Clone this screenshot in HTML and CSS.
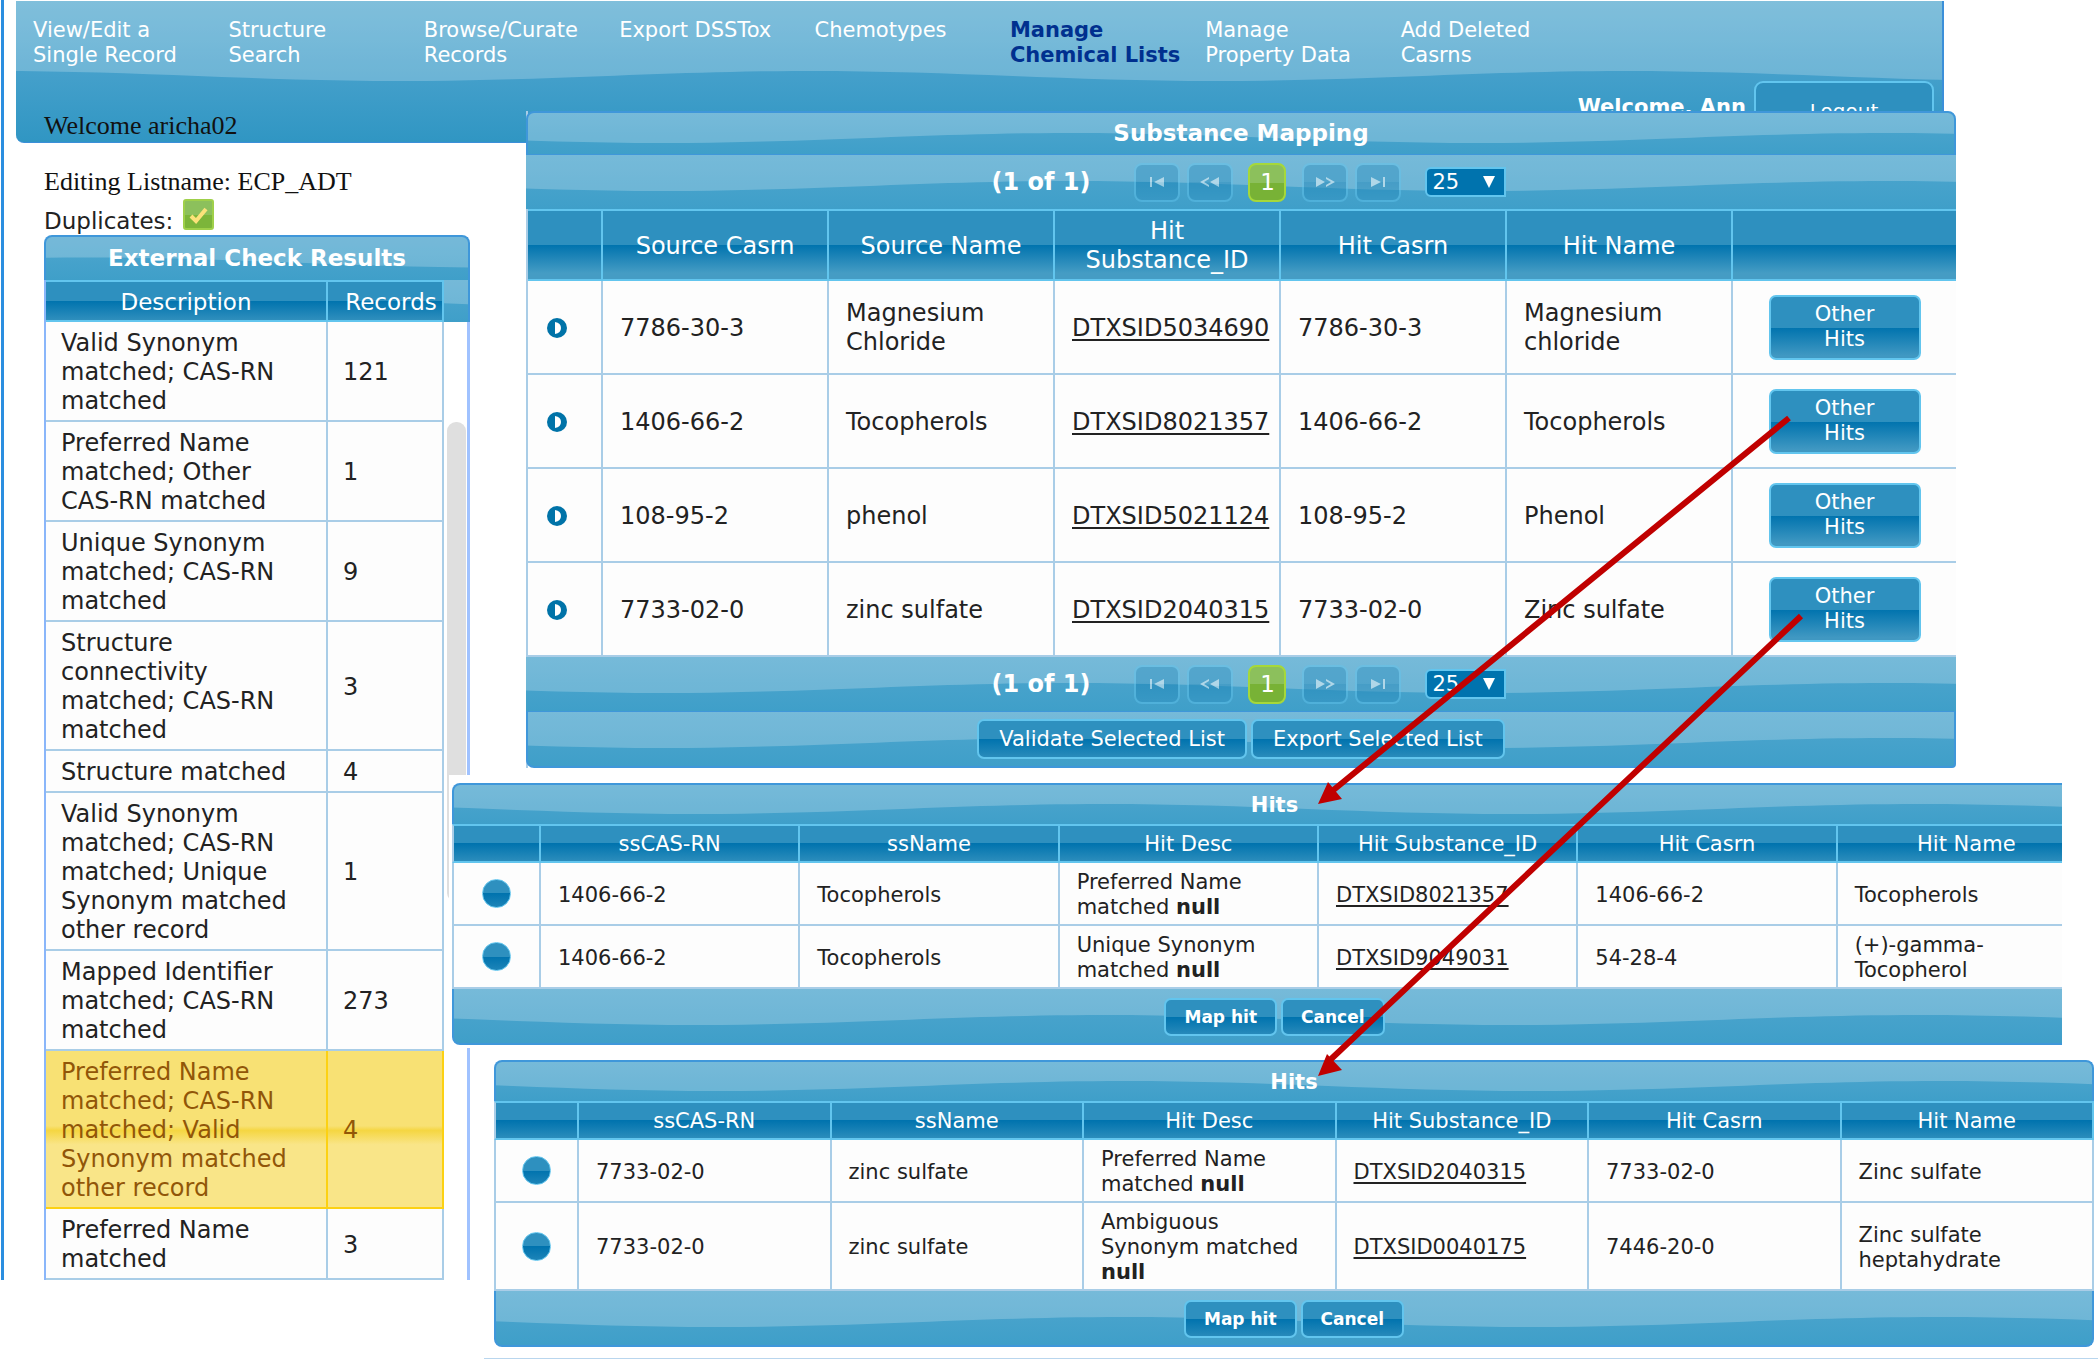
FILE: index.html
```html
<!DOCTYPE html>
<html lang="en">
<head>
<meta charset="utf-8">
<title>Manage Chemical Lists</title>
<link rel="stylesheet" href="styles.css">
</head>
<body>
<div class="app">
  <header class="header wave">
    <nav class="nav">
      <a href="#">View/Edit a<br>Single Record</a>
      <a href="#">Structure<br>Search</a>
      <a href="#">Browse/Curate<br>Records</a>
      <a href="#">Export DSSTox</a>
      <a href="#">Chemotypes</a>
      <a href="#" class="current">Manage<br>Chemical Lists</a>
      <a href="#">Manage<br>Property Data</a>
      <a href="#">Add Deleted<br>Casrns</a>
    </nav>
    <div class="account">
      <span class="user">Welcome aricha02</span>
      <strong class="greeting">Welcome, Ann</strong>
      <button class="btn logout">Logout</button>
    </div>
  </header>
  <main class="list-info">
    <p class="listname">Editing Listname: ECP_ADT</p>
    <div class="dup"><label for="dup">Duplicates:</label><input type="checkbox" id="dup" checked></div>
    <section class="check">
      <h2 class="bar wave check-title" id="check-title">External Check Results</h2>
      <div class="check-body">
        <table class="grid check-table" aria-labelledby="check-title">
          <colgroup><col><col class="col-records"></colgroup>
          <thead><tr><th>Description</th><th>Records</th></tr></thead>
          <tbody>
            <tr><td>Valid Synonym matched; CAS-RN matched</td><td>121</td></tr>
            <tr><td>Preferred Name matched; Other CAS-RN matched</td><td>1</td></tr>
            <tr><td>Unique Synonym matched; CAS-RN matched</td><td>9</td></tr>
            <tr><td>Structure connectivity matched; CAS-RN matched</td><td>3</td></tr>
            <tr><td>Structure matched</td><td>4</td></tr>
            <tr><td>Valid Synonym matched; CAS-RN matched; Unique Synonym matched other record</td><td>1</td></tr>
            <tr><td>Mapped Identifier matched; CAS-RN matched</td><td>273</td></tr>
            <tr class="selected"><td>Preferred Name matched; CAS-RN matched; Valid Synonym matched other record</td><td>4</td></tr>
            <tr><td>Preferred Name matched</td><td>3</td></tr>
          </tbody>
        </table>
        <div class="scroll"><div class="scroll-head wave"></div><div class="track"><div class="thumb"></div></div></div>
      </div>
    </section>
  </main>
</div>

<div class="windows">
  <section class="mapping">
    <h2 class="bar wave" id="map-title">Substance Mapping</h2>
    <div class="pager wave">
      <strong>(1 of 1)</strong>
      <button class="page" disabled aria-label="First page"><svg width="18" height="12" viewBox="0 0 18 12"><path d="M2 1h2v10H2zM16 1v10L6 6z"/></svg></button>
      <button class="page" disabled aria-label="Previous page"><svg width="20" height="12" viewBox="0 0 20 12"><path d="M19 1v10L10 6zM9 1v2L4 6l5 3v2L0 6z"/></svg></button>
      <button class="page active">1</button>
      <button class="page" disabled aria-label="Next page"><svg width="20" height="12" viewBox="0 0 20 12"><path d="M1 1v10l9-5zM11 1v2l5 3-5 3v2l9-5z"/></svg></button>
      <button class="page" disabled aria-label="Last page"><svg width="18" height="12" viewBox="0 0 18 12"><path d="M14 1h2v10h-2zM2 1v10l10-5z"/></svg></button>
      <select aria-label="Rows per page"><option>25</option></select>
    </div>
    <table class="grid" aria-labelledby="map-title">
      <colgroup><col class="col-toggle"><col><col><col><col><col><col class="col-act"></colgroup>
      <thead><tr><th></th><th>Source Casrn</th><th>Source Name</th><th>Hit Substance_ID</th><th>Hit Casrn</th><th>Hit Name</th><th></th></tr></thead>
      <tbody>
        <tr><td><button class="toggle" aria-label="Expand"><svg width="20" height="20" viewBox="0 0 20 20"><circle cx="10" cy="10" r="10"/><path d="M8 4q6 1 6 6t-6 6z"/></svg></button></td><td>7786-30-3</td><td>Magnesium Chloride</td><td><a href="#">DTXSID5034690</a></td><td>7786-30-3</td><td>Magnesium chloride</td><td class="act"><button class="btn other">Other<br>Hits</button></td></tr>
        <tr><td><button class="toggle" aria-label="Expand"><svg width="20" height="20" viewBox="0 0 20 20"><circle cx="10" cy="10" r="10"/><path d="M8 4q6 1 6 6t-6 6z"/></svg></button></td><td>1406-66-2</td><td>Tocopherols</td><td><a href="#">DTXSID8021357</a></td><td>1406-66-2</td><td>Tocopherols</td><td class="act"><button class="btn other">Other<br>Hits</button></td></tr>
        <tr><td><button class="toggle" aria-label="Expand"><svg width="20" height="20" viewBox="0 0 20 20"><circle cx="10" cy="10" r="10"/><path d="M8 4q6 1 6 6t-6 6z"/></svg></button></td><td>108-95-2</td><td>phenol</td><td><a href="#">DTXSID5021124</a></td><td>108-95-2</td><td>Phenol</td><td class="act"><button class="btn other">Other<br>Hits</button></td></tr>
        <tr><td><button class="toggle" aria-label="Expand"><svg width="20" height="20" viewBox="0 0 20 20"><circle cx="10" cy="10" r="10"/><path d="M8 4q6 1 6 6t-6 6z"/></svg></button></td><td>7733-02-0</td><td>zinc sulfate</td><td><a href="#">DTXSID2040315</a></td><td>7733-02-0</td><td>Zinc sulfate</td><td class="act"><button class="btn other">Other<br>Hits</button></td></tr>
      </tbody>
    </table>
    <div class="pager wave">
      <strong>(1 of 1)</strong>
      <button class="page" disabled aria-label="First page"><svg width="18" height="12" viewBox="0 0 18 12"><path d="M2 1h2v10H2zM16 1v10L6 6z"/></svg></button>
      <button class="page" disabled aria-label="Previous page"><svg width="20" height="12" viewBox="0 0 20 12"><path d="M19 1v10L10 6zM9 1v2L4 6l5 3v2L0 6z"/></svg></button>
      <button class="page active">1</button>
      <button class="page" disabled aria-label="Next page"><svg width="20" height="12" viewBox="0 0 20 12"><path d="M1 1v10l9-5zM11 1v2l5 3-5 3v2l9-5z"/></svg></button>
      <button class="page" disabled aria-label="Last page"><svg width="18" height="12" viewBox="0 0 18 12"><path d="M14 1h2v10h-2zM2 1v10l10-5z"/></svg></button>
      <select aria-label="Rows per page"><option>25</option></select>
    </div>
    <div class="foot wave map-foot">
      <button class="btn wide">Validate Selected List</button>
      <button class="btn wide">Export Selected List</button>
    </div>
  </section>

  <div class="hits-clip">
    <section class="hits">
      <h2 class="bar wave" id="hits-a">Hits</h2>
      <table class="grid" aria-labelledby="hits-a">
        <colgroup><col class="col-pick"><col><col><col><col><col><col></colgroup>
        <thead><tr><th></th><th>ssCAS-RN</th><th>ssName</th><th>Hit Desc</th><th>Hit Substance_ID</th><th>Hit Casrn</th><th>Hit Name</th></tr></thead>
        <tbody>
          <tr><td><input type="radio" name="a" aria-label="DTXSID8021357"></td><td>1406-66-2</td><td>Tocopherols</td><td>Preferred Name matched <b>null</b></td><td><a href="#">DTXSID8021357</a></td><td>1406-66-2</td><td>Tocopherols</td></tr>
          <tr><td><input type="radio" name="a" aria-label="DTXSID9049031"></td><td>1406-66-2</td><td>Tocopherols</td><td>Unique Synonym matched <b>null</b></td><td><a href="#">DTXSID9049031</a></td><td>54-28-4</td><td>(+)-gamma-<wbr>Tocopherol</td></tr>
        </tbody>
      </table>
      <div class="foot wave"><button class="btn small">Map hit</button><button class="btn small">Cancel</button></div>
    </section>
  </div>

  <section class="hits second">
    <h2 class="bar wave" id="hits-b">Hits</h2>
    <table class="grid" aria-labelledby="hits-b">
      <colgroup><col class="col-pick"><col><col><col><col><col><col></colgroup>
      <thead><tr><th></th><th>ssCAS-RN</th><th>ssName</th><th>Hit Desc</th><th>Hit Substance_ID</th><th>Hit Casrn</th><th>Hit Name</th></tr></thead>
      <tbody>
        <tr><td><input type="radio" name="b" aria-label="DTXSID2040315"></td><td>7733-02-0</td><td>zinc sulfate</td><td>Preferred Name matched <b>null</b></td><td><a href="#">DTXSID2040315</a></td><td>7733-02-0</td><td>Zinc sulfate</td></tr>
        <tr><td><input type="radio" name="b" aria-label="DTXSID0040175"></td><td>7733-02-0</td><td>zinc sulfate</td><td>Ambiguous Synonym matched <b>null</b></td><td><a href="#">DTXSID0040175</a></td><td>7446-20-0</td><td>Zinc sulfate heptahydrate</td></tr>
      </tbody>
    </table>
    <div class="foot wave"><button class="btn small">Map hit</button><button class="btn small">Cancel</button></div>
  </section>
  <div class="rule"></div>

  <svg class="arrows" aria-hidden="true">
    <path class="shaft" d="M1340 307L882 681M1352 505L880 950"/>
    <path class="head" d="M869 693L879 671L893 688ZM869 965L878 943L893 959Z"/>
  </svg>
</div>
</body>
</html>
```
FILE: styles.css
```css
* { box-sizing: border-box; }
body {
  display: grid;
  margin: 0;
  background: #fff;
  color: #222;
  font: 23px/29px "DejaVu Sans", Verdana, sans-serif;
}
h2, p { margin: 0; }
button, select, input { font: inherit; margin: 0; }
button { cursor: pointer; }

/* glossy wave surface shared by every bar */
.wave {
  background:
    url("data:image/svg+xml,%3Csvg xmlns='http://www.w3.org/2000/svg' width='815' height='200'%3E%3Cpath d='M-170 109C-20 109 87 99 237 99C387 99 495 109 645 109C795 109 902 99 1052 99V0H-170Z' fill='%23fff' fill-opacity='.22'/%3E%3C/svg%3E") 50% 50% repeat-x,
    linear-gradient(#4fa6ce, #3f9fc9);
}

/* the page and its floating windows share one grid cell */
.app {
  grid-area: 1 / 1;
  align-self: start;
  min-width: 0;
  margin: 0 156px 0 1px;
  padding-top: 1px;
  border-left: 3px solid #2a8ee0;
}
.header {
  margin-left: 12px;
  padding: 17px 8px 0 17px;
  border: solid #3b8fd9;
  border-width: 0 2px 1px 0;
  border-radius: 0 0 8px 8px;
  background-image:
    url("data:image/svg+xml,%3Csvg xmlns='http://www.w3.org/2000/svg' width='815' height='200'%3E%3Cpath d='M-170 109C-20 109 87 99 237 99C387 99 495 109 645 109C795 109 902 99 1052 99V0H-170Z' fill='%23fff' fill-opacity='.22'/%3E%3C/svg%3E"),
    linear-gradient(#5cadd1, #45a0cb 50%, #3096c3);
}
.nav {
  display: grid;
  grid-template-columns: repeat(8, 1fr);
  margin-right: 338px;
  font-size: 21px;
  line-height: 25px;
}
.nav a { color: #fff; text-decoration: none; white-space: nowrap; }
.nav .current { color: #00308f; font-weight: bold; }
.account { display: flex; margin-top: 13px; height: 61px; }
.user {
  margin: auto auto 2px 11px;
  color: #111;
  font: 26px/28px "Liberation Serif", "Times New Roman", serif;
}
.greeting { color: #fff; font-size: 21px; line-height: 52px; margin-right: 8px; }

.btn {
  padding: 0;
  border: 2px solid #62c5ee;
  border-radius: 7px;
  color: #fff;
  background: linear-gradient(#2e90bf 50%, #0073ae 50%, #4098c2 calc(50% + 28px));
}
.logout { width: 180px; font-size: 20px; border-radius: 9px; }

.list-info { width: 426px; margin-left: 40px; padding-top: 24px; }
.listname { font: 26px/30px "Liberation Serif", "Times New Roman", serif; color: #111; }
.dup { display: flex; align-items: center; height: 38px; gap: 10px; }
.dup label { padding-top: 10px; }
.dup input {
  appearance: none;
  width: 31px;
  height: 31px;
  margin-bottom: 3px;
  border: 2px solid #9fd04a;
  border-radius: 3px;
  background:
    url("data:image/svg+xml,%3Csvg xmlns='http://www.w3.org/2000/svg' width='20' height='20'%3E%3Cpath d='M2 11L7 16L17 4' fill='none' stroke='%23fbe27a' stroke-width='4'/%3E%3C/svg%3E") center no-repeat,
    linear-gradient(#8cc05c 50%, #7cb53a 50%);
}

.bar {
  height: 44px;
  border: 2px solid #3f97da;
  border-bottom-width: 0;
  border-radius: 8px 8px 0 0;
  color: #fff;
  font-size: 23px;
  line-height: 42px;
  text-align: center;
}
.check-title { height: 45px; }
.check-body { display: flex; border-left: 2px solid #8ab6fa; }
.grid { width: 100%; table-layout: fixed; border-collapse: separate; border-spacing: 0; }
.grid th {
  padding: 5px 17px;
  border: 2px solid #62c5ee;
  border-width: 2px 2px 2px 0;
  color: #fff;
  font-weight: normal;
  background: linear-gradient(#2e90bf 50%, #0073ae 50%, #459cc4 calc(50% + 28px));
}
.grid td {
  padding: 7px 30px 4px 17px;
  border: solid #a9cde7;
  border-width: 0 2px 2px 0;
  background: #fdfdfd;
}
.grid a { color: inherit; text-underline-offset: 3px; text-decoration-thickness: 2px; }
.grid .selected td {
  color: #915608;
  border-color: #fcd113;
  background: linear-gradient(#f8e174 48%, #f5d642 51%, #f9e588 60%);
}
.check-table { width: auto; flex: 1; }
.check-table .col-records { width: 116px; }
.check-table th { height: 42px; padding: 5px 0 2px 12px; }
.check-table th:first-child { padding-left: 0; }
.check-table td { padding-left: 15px; font-size: 24px; }
.scroll { display: flex; flex-direction: column; width: 26px; }
.scroll-head { height: 42px; border-right: 2px solid #3f97da; }
.track { flex: 1; padding: 100px 1px 0 3px; border-right: 3px solid #a0c2ff; }
.thumb { height: 480px; border-radius: 9px; background: #dfdfdf; }

.windows {
  grid-area: 1 / 1;
  position: relative;
  min-width: 0;
  margin: 111px 0 0 449px;
}
.mapping {
  margin: 0 144px 0 77px;
  border-left: 2px solid #a9cde7;
}
.mapping .bar { margin-left: -2px; border-bottom-width: 1px; line-height: 40px; }
.mapping .grid { font-size: 24px; }
.mapping .col-toggle { width: 75px; }
.mapping .col-act { width: 223px; }
.mapping td { height: 94px; padding: 2px 8px 0 17px; }
.mapping th { height: 72px; padding-top: 2px; padding-bottom: 0; }
.mapping td:last-child, .mapping th:last-child { border-right-width: 0; }
.pager {
  display: flex;
  justify-content: center;
  align-items: center;
  height: 54px;
  padding-left: 16px;
  margin-left: -2px;
  color: #fff;
}
.pager strong { margin-right: 44px; font-size: 24px; }
.page {
  display: grid;
  place-content: center;
  width: 46px;
  height: 39px;
  margin-right: 7px;
  padding: 0;
  border: 2px solid #62c5ee;
  border-radius: 8px;
  color: #fff;
  background: linear-gradient(#2e90bf 50%, #1680b4 50%, #2e90bf);
}
.page:disabled { opacity: .45; }
.page svg { fill: #fff; }
.page.active {
  width: 38px;
  margin: 0 16px 0 8px;
  border-color: #a6d83a;
  background: linear-gradient(#8cc05c 50%, #78b236 50%);
}
.pager select {
  appearance: none;
  width: 81px;
  height: 30px;
  margin-left: 17px;
  padding: 0 5px;
  border: 2px solid #62c5ee;
  border-radius: 6px 0 0 6px;
  color: #fff;
  font-size: 21px;
  line-height: 26px;
  background:
    url("data:image/svg+xml,%3Csvg xmlns='http://www.w3.org/2000/svg' width='12' height='12'%3E%3Cpath d='M0 0H12L6 12Z' fill='%23fff'/%3E%3C/svg%3E") right 9px center no-repeat,
    #0073ae;
}
.toggle { display: block; margin-left: 2px; padding: 0; border: 0; background: none; line-height: 0; }
.toggle circle { fill: #0073a8; }
.toggle path { fill: #fff; }
.grid .act { padding: 0; text-align: center; }
.other { width: 152px; height: 65px; font-size: 21px; line-height: 25px; }
.foot {
  display: flex;
  justify-content: center;
  align-items: center;
  gap: 4px;
  height: 56px;
  padding-top: 2px;
  border: 2px solid #3f97da;
  border-top-width: 0;
  border-radius: 0 0 8px 8px;
}
.map-foot { height: 57px; margin-left: -2px; padding-top: 0; border-top-width: 1px; border-radius: 0 0 4px 8px; }
.wide { height: 40px; padding: 0 20px; font-size: 21px; }
.small { height: 38px; padding: 0 18px; font-size: 17px; font-weight: bold; }

.hits-clip {
  margin: 7px 38px 12px 0;
  padding: 8px 0 3px 3px;
  overflow: hidden;
  background: #fff;
}
.hits-clip .hits { width: calc(100% + 35px); }
.hits { font-size: 21px; line-height: 25px; }
.hits .bar { height: 41px; font-size: 21px; line-height: 41px; }
.hits .col-pick { width: 89px; }
.hits tr > :first-child { border-left: 2px solid #a9cde7; padding: 0; text-align: center; }
.hits th { padding: 6px 0 4px; }
.hits td input {
  appearance: none;
  display: block;
  width: 29px;
  height: 29px;
  margin: 0 auto;
  border: 1px solid #62c5ee;
  border-radius: 50%;
  background: linear-gradient(#2e90bf 50%, #0073ae 50%, #1d84b8);
}
.second { margin: 0 6px 0 45px; }
.hits.second .col-pick { width: 85px; }
.rule { height: 2px; margin: 11px 2px 0 35px; background: #b9d6ee; }

.arrows { position: absolute; inset: 0; width: 100%; height: 100%; pointer-events: none; }
.shaft { fill: none; stroke: #c00000; stroke-width: 6; }
.head { fill: #c00000; }
```
